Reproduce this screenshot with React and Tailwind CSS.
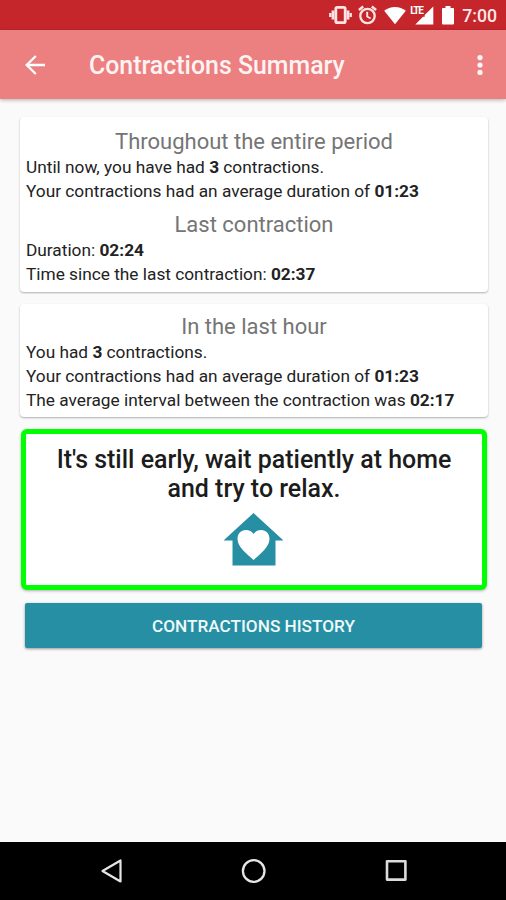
// Contractions summary screen
const throughout = {
  title: "Throughout the entire period",
  rows: [
    { before: "Until now, you have had ", value: "3", after: " contractions." },
    { before: "Your contractions had an average duration of ", value: "01:23" },
  ],
};

const last = {
  title: "Last contraction",
  rows: [
    { before: "Duration: ", value: "02:24" },
    { before: "Time since the last contraction: ", value: "02:37" },
  ],
};

const lastHour = {
  title: "In the last hour",
  rows: [
    { before: "You had ", value: "3", after: " contractions." },
    { before: "Your contractions had an average duration of ", value: "01:23" },
    { before: "The average interval between the contraction was ", value: "02:17" },
  ],
};

function StatusBar() {
  return (
    <div className="h-[30px] shrink-0 bg-[#c5262b] flex items-center justify-end pr-[9px] text-white">
      {/* Vibrate */}
      <svg width="24" height="20" viewBox="0 0 24 20" fill="none" stroke="#fde3e3">
        <rect x="6.800" y="2.300" width="9.400" height="15.400" rx="1.500" strokeWidth="2.800" />
        <path d="M4 5.500v9M19 5.500v9" strokeWidth="2.800" />
        <path d="M1.300 8v4M21.700 8v4" strokeWidth="2.400" />
      </svg>
      {/* Alarm */}
      <svg className="ml-[5px]" width="20" height="20" viewBox="0 0 20 20" fill="none" stroke="#fde3e3">
        <circle cx="9.500" cy="11" r="7.200" strokeWidth="2.300" />
        <path d="M.9 5 5.200 1.500M18.100 5 13.800 1.500" strokeWidth="2.400" />
        <path d="M9.200 6.800v4.700l3.400 2" strokeWidth="1.900" />
      </svg>
      {/* Wifi */}
      <svg className="ml-[6px]" width="22" height="20" viewBox="0 0 22 20" fill="#fff">
        <path d="M11 19.300.2 5.700C3.200 3.200 6.900 1.900 11 1.900s7.800 1.300 10.800 3.800z" />
      </svg>
      {/* LTE signal */}
      <div className="relative ml-[4px] w-[24px] h-5">
        <svg width="24" height="20" viewBox="0 0 24 20" fill="#fff">
          <path d="M23.300 1.500v18H5.300l7.700-7.700h1.700v-1.700z" />
        </svg>
        <span className="absolute left-0 top-[1px] text-[10px] leading-[9px] font-bold tracking-[-1.200px]">LTE</span>
      </div>
      {/* Battery */}
      <svg className="ml-2" width="12" height="20" viewBox="0 0 12 20" fill="#fff">
        <path d="M3.500 1h5v2H11a1 1 0 0 1 1 1v14.500a1 1 0 0 1-1 1H1a1 1 0 0 1-1-1V4a1 1 0 0 1 1-1h2.500z" />
      </svg>
      <span className="ml-[8px] text-[17.700px] leading-5 font-medium text-[#fde8e8] mt-[2px]">7:00</span>
    </div>
  );
}

function Toolbar() {
  return (
    <header className="h-[69px] shrink-0 bg-[#ec8080] flex items-center pl-[25px] pr-[23px] shadow-[0_1px_4px_rgba(0,0,0,0.3)] z-10">
      <svg width="20" height="20" viewBox="0 0 20 20" fill="none" stroke="#fff" strokeWidth="2.300">
        <path d="M20 10H2M10.800 1 1.700 10l9.100 9" />
      </svg>
      <h1 className="ml-11 mt-[2px] text-[24.900px] leading-8 font-medium text-[#fff3f3]">Contractions Summary</h1>
      <svg className="ml-auto" width="6" height="20" viewBox="0 0 6 20" fill="#fff5f5">
        <circle cx="3" cy="2.600" r="2.600" />
        <circle cx="3" cy="10" r="2.600" />
        <circle cx="3" cy="17.400" r="2.600" />
      </svg>
    </header>
  );
}

function Section({ title, rows }) {
  return (
    <section>
      <h2 className="text-center text-[22px] leading-[26px] text-[#757575]">{title}</h2>
      {rows.map((row) => (
        <p key={row.before} className="text-[17.270px] leading-6 text-[#222] whitespace-nowrap">
          {row.before}
          <b className="font-bold">{row.value}</b>
          {row.after}
        </p>
      ))}
    </section>
  );
}

function NavBar() {
  return (
    <nav className="h-[58px] shrink-0 bg-black flex items-center">
      <svg className="ml-[100px]" width="24" height="26" viewBox="0 0 24 26" fill="none" stroke="#e6e6e6" strokeWidth="2.200" strokeLinejoin="round">
        <path d="M20.500 2.500v21L2.500 13z" />
      </svg>
      <svg className="ml-[117px]" width="26" height="26" viewBox="0 0 26 26" fill="none" stroke="#e6e6e6" strokeWidth="2.300">
        <circle cx="12.700" cy="13" r="10.800" />
      </svg>
      <svg className="ml-[117px]" width="24" height="26" viewBox="0 0 24 26" fill="none" stroke="#dcdcdc" strokeWidth="2.600" strokeLinejoin="round">
        <rect x="3" y="3.200" width="18.400" height="18.400" />
      </svg>
    </nav>
  );
}

export default function App() {
  return (
    <div className="w-[506px] h-[900px] flex flex-col overflow-hidden bg-[#fafafa] font-[Roboto,sans-serif]">
      <StatusBar />
      <Toolbar />

      <main className="flex-1 flex flex-col pt-[18px] px-5">
        {/* Stats cards */}
        <div className="w-[468px] h-[175px] shrink-0 rounded bg-white px-1.5 pt-3 flex flex-col gap-[9px] shadow-[0_1px_2px_rgba(0,0,0,0.3)]">
          <Section {...throughout} />
          <Section {...last} />
        </div>
        <div className="mt-3 w-[468px] h-[113px] shrink-0 rounded bg-white px-1.5 pt-[10px] shadow-[0_1px_2px_rgba(0,0,0,0.3)]">
          <Section {...lastHour} />
        </div>

        {/* Advice */}
        <div className="mt-3 ml-[1px] w-[466px] h-[161px] shrink-0 rounded-md border-[5px] border-[#00ff00] bg-white flex flex-col items-center pt-[11px] shadow-[0_1px_3px_rgba(0,0,0,0.3)]">
          <p className="text-center text-[24.950px] leading-[29px] font-medium text-[#1c1c1c]">
            It's still early, wait patiently at home
            <br />
            and try to relax.
          </p>
          <svg className="mt-2.5 -translate-x-[0.500px]" width="60" height="54" viewBox="0 0 60 54">
            <path d="M30 0 60 27.500h-8V52.500H9V27.500H0z" fill="#278fa3" />
            <path
              d="M30 47C24 41.500 14 34 14 26c0-5.300 3.500-9 8.300-9 3.300 0 6.200 1.500 7.700 4 1.500-2.500 4.400-4 7.700-4 4.800 0 8.300 3.700 8.300 9C46 34 36 41.500 30 47z"
              fill="#fff"
            />
          </svg>
        </div>

        <button className="mt-[13px] ml-[5px] w-[457px] h-[45px] shrink-0 rounded-[2px] bg-[#278fa3] text-[17.200px] font-medium text-[#eefafc] shadow-[0_1px_3px_rgba(0,0,0,0.4)] pt-[2px]">
          CONTRACTIONS HISTORY
        </button>
      </main>

      <NavBar />
    </div>
  );
}
